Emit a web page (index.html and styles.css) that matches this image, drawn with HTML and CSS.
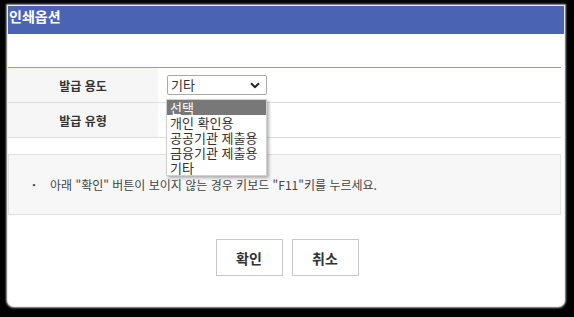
FILE: index.html
```html
<!DOCTYPE html>
<html lang="ko">
<head>
  <meta charset="UTF-8">
  <meta name="viewport" content="width=device-width, initial-scale=1.0">
  <title>인쇄옵션</title>
  <link rel="stylesheet" href="styles.css">
</head>
<body>
  <div class="popup">
    <div class="popup-header">인쇄옵션</div>

    <div class="popup-body">
      <table class="option-table">
        <tr>
          <th>발급 용도</th>
          <td>
            <div class="select-wrap">
              <div class="select-box">
                <span>기타</span>
                <svg class="chevron" width="10" height="7" viewBox="0 0 10 7">
                  <path d="M1 1.2 L5 5.2 L9 1.2" fill="none" stroke="#222" stroke-width="2"/>
                </svg>
              </div>
              <ul class="select-list">
                <li class="selected">선택</li>
                <li>개인 확인용</li>
                <li>공공기관 제출용</li>
                <li>금융기관 제출용</li>
                <li>기타</li>
              </ul>
            </div>
          </td>
        </tr>
        <tr>
          <th>발급 유형</th>
          <td></td>
        </tr>
      </table>

      <div class="notice">
        <span class="bullet">·</span>
        아래 "확인" 버튼이 보이지 않는 경우 키보드 "F11"키를 누르세요.
      </div>

      <div class="buttons">
        <button type="button">확인</button>
        <button type="button">취소</button>
      </div>
    </div>
  </div>
</body>
</html>
```

FILE: styles.css
```css
html, body {
  margin: 0;
  padding: 0;
  background-color: #000;
}

body {
  font-family: "Noto Sans CJK KR", "Noto Sans", sans-serif;
  color: #333;
  padding: 6px 10px 11px 8px;
}

.popup {
  height: 300px;
  background-color: #fff;
  border-radius: 0 0 6px 6px;
  box-shadow: 0 0 0 1px #ececec, 0 0 2px 2px #b0b0b0;
}

.popup-header {
  height: 28px;
  background-color: #4b63b3;
  color: #fff;
  font-size: 14px;
  font-weight: bold;
  line-height: 20px;
  padding-left: 1px;
}

.popup-body {
  padding: 33px 3px 0 0;
}

.option-table {
  width: 100%;
  border-collapse: collapse;
  border-top: 1px solid #9297cc;
}

.option-table th,
.option-table td {
  height: 34px;
  padding: 0;
  border-bottom: 1px solid #dcdcdc;
}

.option-table th {
  width: 150px;
  background-color: #f6f6f6;
  font-size: 12px;
  font-weight: bold;
  color: #333;
}

.option-table td {
  padding-left: 9px;
}

.select-wrap {
  position: relative;
  width: 100px;
}

.select-box {
  display: flex;
  align-items: center;
  justify-content: space-between;
  height: 18px;
  border: 1px solid #a9a9a9;
  border-radius: 2px;
  padding: 0 6px 0 3px;
  font-size: 13px;
  line-height: 18px;
  color: #333;
}

.select-list {
  position: absolute;
  top: 24px;
  left: -1px;
  width: 99px;
  margin: 0;
  padding: 0;
  list-style: none;
  background-color: #fff;
  border: 1px solid #d0d0d0;
  box-shadow: 2px 2px 3px rgba(0, 0, 0, 0.3);
  z-index: 10;
}

.select-list li {
  height: 15px;
  line-height: 15px;
  padding-left: 3px;
  font-size: 13px;
  color: #333;
  white-space: nowrap;
}

.select-list li.selected {
  background-color: #787878;
  color: #fff;
}

.notice {
  margin-top: 16px;
  height: 59px;
  display: flex;
  align-items: center;
  background-color: #f7f7f7;
  border: 1px solid #e0e0e0;
  font-size: 12px;
  color: #444;
  padding-left: 23px;
}

.notice .bullet {
  width: 18px;
  font-weight: bold;
}

.buttons {
  display: flex;
  justify-content: center;
  gap: 9px;
  margin-top: 24px;
  padding-left: 5px;
}

.buttons button {
  width: 67px;
  height: 37px;
  background-color: #fff;
  border: 1px solid #c8c8c8;
  font-family: "Noto Sans CJK KR", sans-serif;
  font-size: 14px;
  font-weight: bold;
  color: #333;
  cursor: pointer;
}
```
